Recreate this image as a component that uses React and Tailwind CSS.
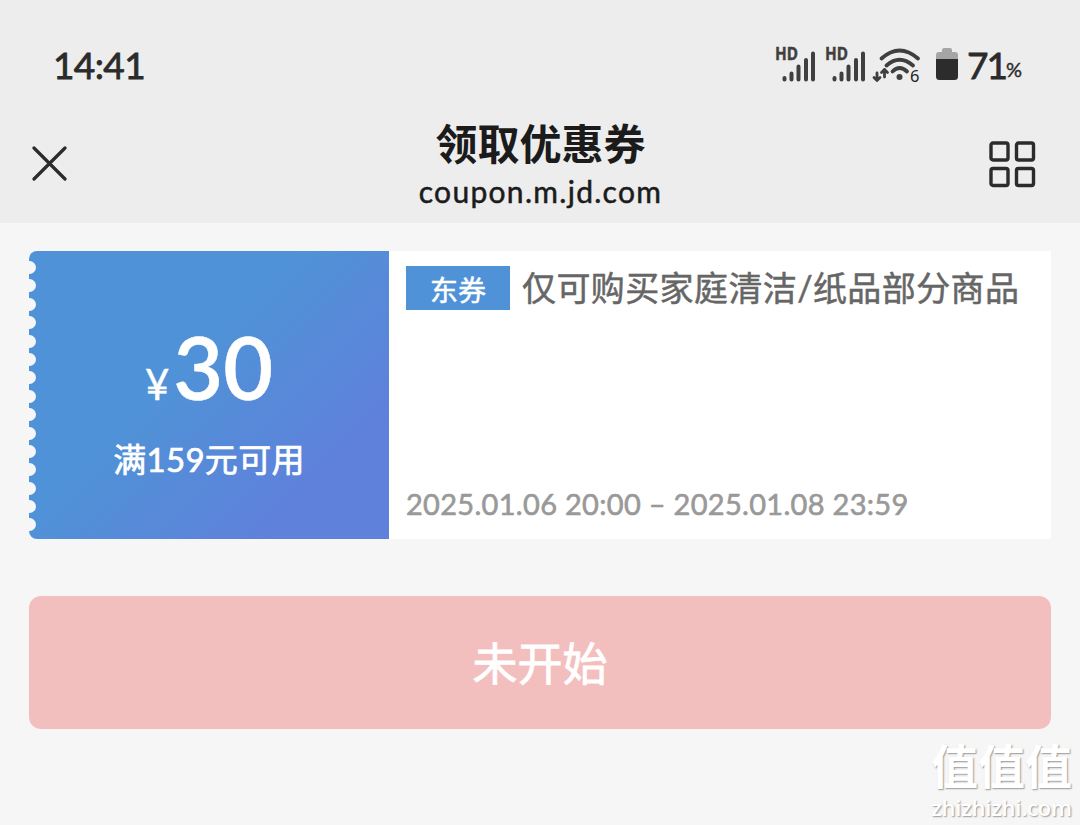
import React from "react";

const HOLES = Array.from({ length: 15 });

const Signal = () => (
  <svg width="42" height="38" viewBox="0 0 42 38" className="overflow-visible text-[#3f3f3f]">
    <text x="1" y="14" fontSize="17.5" fill="currentColor" stroke="currentColor" strokeWidth="0.4" className="font-['Noto_Sans'] font-bold" textLength="23" lengthAdjust="spacingAndGlyphs">
      HD
    </text>
    <g stroke="currentColor" strokeWidth="4" strokeLinecap="round">
      <path d="M10.500 32v1.500M17.500 27.500v6M24.500 20.500v13M32 14v19.500M39 7.500v26" />
    </g>
  </svg>
);

const Wifi = () => (
  <svg width="50" height="38" viewBox="0 0 50 38" fill="none" className="overflow-visible text-[#3f3f3f]">
    <g stroke="currentColor" strokeWidth="3.8" strokeLinecap="round">
      <path d="M7.500 12.500Q25.500-3.500 44 12.500" />
      <path d="M12.500 19.500Q25.500 8 39 19.500" />
      <path d="M18.500 25.500Q25.500 18.500 33 25.500" />
    </g>
    <circle cx="25.500" cy="31" r="3" fill="currentColor" />
    <g stroke="currentColor" strokeWidth="2.8" strokeLinecap="round" strokeLinejoin="round">
      <path d="M3 27v7.500M0 31.500l3 3 3-3" />
      <path d="M10.500 31v-7.500M7.500 26.500l3-3 3 3" />
    </g>
    <text x="36" y="36" fontSize="16.500" fill="#222" className="font-['Noto_Sans']">
      6
    </text>
  </svg>
);

const Battery = () => (
  <svg width="22" height="32" viewBox="0 0 22 32">
    <path d="M6 2a2 2 0 0 1 2-2h6a2 2 0 0 1 2 2v2h3a3 3 0 0 1 3 3v5H0V7a3 3 0 0 1 3-3h3z" fill="#a5a5a5" />
    <path d="M0 11h22v17.500a3.500 3.500 0 0 1-3.500 3.500h-15A3.500 3.500 0 0 1 0 28.500z" fill="#2c2c2c" />
  </svg>
);

const StatusBar = () => (
  <div className="flex h-[106px] items-start justify-between pt-[46px] pr-[58px] pl-[53px] text-[#2b2b2b]">
    <span className="text-[37px] leading-[37px] tracking-[-0.6px] [-webkit-text-stroke:0.8px]">14:41</span>
    <div className="flex items-start">
      <div className="flex gap-2">
        <Signal />
        <Signal />
        <Wifi />
      </div>
      <div className="ml-3 pt-[2px]">
        <Battery />
      </div>
      <span className="ml-[9px] text-[37px] leading-[38px] tracking-[-2px] [-webkit-text-stroke:0.8px]">71</span>
      <span className="pt-[4px] text-[20px] leading-[38px] [-webkit-text-stroke:0.4px]">%</span>
    </div>
  </div>
);

const NavBar = () => (
  <div className="flex h-[117px] items-start justify-between pr-11 pl-8 text-[#1b1b1b]">
    <div className="w-[47px] pt-[40px]">
      <svg width="35" height="35" viewBox="0 0 35 35" stroke="#2b2b2b" strokeWidth="3.2" strokeLinecap="round">
        <path d="M2 2l31 31M33 2L2 33" />
      </svg>
    </div>
    <div className="flex flex-col items-center pt-[13px] pl-[14px]">
      <h1 className="text-[42px] leading-[50px] font-bold">领取优惠券</h1>
      <p className="text-[30px] leading-[44px] tracking-[1.3px] [-webkit-text-stroke:0.5px]">coupon.m.jd.com</p>
    </div>
    <div className="pt-[34px]">
      <svg width="48" height="48" viewBox="0 0 48 48" fill="none" stroke="#2b2b2b" strokeWidth="3.4">
        <rect x="3" y="3" width="17" height="17" rx="2" />
        <rect x="28.500" y="3" width="17" height="17" rx="2" />
        <rect x="3" y="28.500" width="17" height="17" rx="2" />
        <rect x="28.500" y="28.500" width="17" height="17" rx="2" />
      </svg>
    </div>
  </div>
);

const Coupon = () => (
  <div className="flex h-72 rounded-l-lg bg-white">
    <div className="relative flex w-[360px] flex-col items-center rounded-l-lg bg-[linear-gradient(135deg,#5092d7_0%,#5092d7_42%,#5f80db_82%,#5f80db_100%)] pt-[68px] text-white">
      <div className="absolute top-[10px] left-0 flex flex-col gap-[5.4px]">
        {HOLES.map((_, i) => (
          <i key={i} className="h-[13px] w-[7px] rounded-r-full bg-[#f6f6f6]" />
        ))}
      </div>
      <div className="flex items-baseline leading-[96px]">
        <span className="mr-1 text-[42px] [-webkit-text-stroke:0.4px]">¥</span>
        <span className="text-[86px] font-semibold [-webkit-text-stroke:0.5px]">30</span>
      </div>
      <p className="mt-[3px] text-[33px] leading-[48px] tracking-[0.3px] [-webkit-text-stroke:0.7px]">满159元可用</p>
    </div>
    <div className="flex flex-1 flex-col justify-between pt-[15px] pb-[13px] pl-[17px]">
      <div className="flex items-center">
        <span className="flex h-11 w-[104px] items-center justify-center bg-[#5092d7] pt-[3px] text-[28px] text-white [-webkit-text-stroke:0.5px]">东券</span>
        <span className="ml-3 text-[34px] leading-[44px] tracking-[0.4px] whitespace-nowrap text-[#666] [-webkit-text-stroke:0.5px]">
          仅可购买家庭清洁/纸品部分商品
        </span>
      </div>
      <p className="text-[29px] leading-[44px] tracking-[0.300px] whitespace-nowrap text-[#999] [-webkit-text-stroke:0.6px]">2025.01.06 20:00 – 2025.01.08 23:59</p>
    </div>
  </div>
);

const Watermark = () => (
  <div className="absolute right-[8px] bottom-[3px] flex flex-col items-center text-white [text-shadow:1px_1px_1.5px_#999]">
    <span className="text-[47px] leading-[52px] font-bold">值值值</span>
    <span className="font-['Open_Sans'] text-[22px] leading-[30px] font-semibold tracking-[-0.2px]">zhizhizhi.com</span>
  </div>
);

const App = () => {
  return (
    <div className="relative h-[825px] w-[1080px] overflow-hidden bg-[#f6f6f6] font-['Lato','Noto_Sans_CJK_SC',sans-serif]">
      <header className="h-[223px] bg-[#ededed]">
        <StatusBar />
        <NavBar />
      </header>
      <main className="px-[29px] pt-7">
        <Coupon />
        <button className="mt-[57px] flex h-[133px] w-full items-center justify-center rounded-xl bg-[#f3bfbe] pt-[5px] text-[45px] text-white [-webkit-text-stroke:0.8px]">
          未开始
        </button>
      </main>
      <Watermark />
    </div>
  );
};

export default App;
